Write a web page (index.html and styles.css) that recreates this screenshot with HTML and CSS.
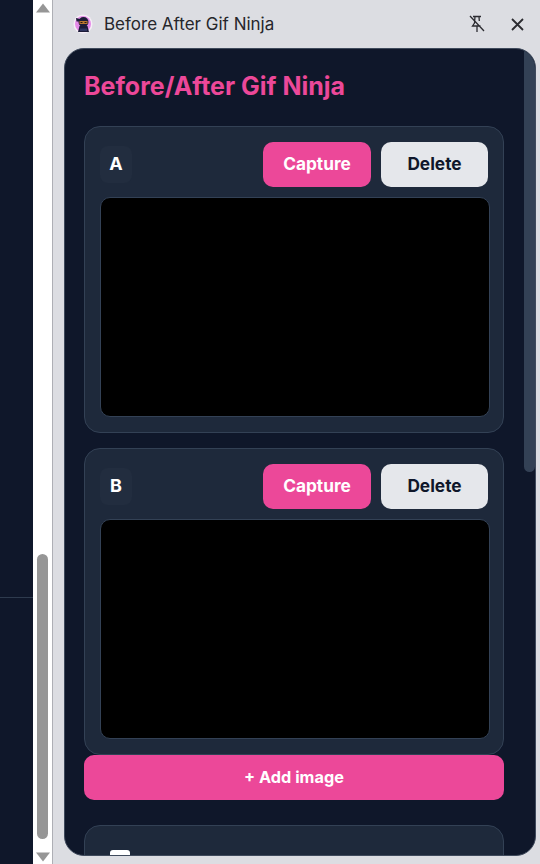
FILE: index.html
```html
<!DOCTYPE html>
<html lang="en">
<head>
<meta charset="utf-8">
<title>Before After Gif Ninja</title>
<link rel="stylesheet" href="styles.css">
</head>
<body>
<div class="page-behind"><div class="behind-line"></div></div>
<div class="page-scrollbar">
  <svg class="arrow" width="14" height="10" viewBox="0 0 14 10"><path d="M7 0.500 L14 9.500 H0 Z" fill="#969696"/></svg>
  <div class="page-thumb"></div>
  <svg class="arrow" width="14" height="10" viewBox="0 0 14 10"><path d="M0 0.500 H14 L7 9.500 Z" fill="#969696"/></svg>
</div>
<aside class="side-panel">
  <header class="panel-head">
    <svg class="logo" width="20" height="20" viewBox="0 0 20 20">
      <circle cx="10" cy="10" r="9.500" fill="#f6eef7"/>
      <circle cx="10" cy="10" r="8" fill="#e58be8"/>
      <path d="M3 4 L7 5 L7 7.500 L3.500 7.500 Z" fill="#1c1c38"/>
      <circle cx="10.500" cy="8" r="5" fill="#1c1c38"/>
      <path d="M6.500 12 H14.500 L16 18 H5 Z" fill="#1c1c38"/>
      <rect x="6.500" y="7" width="8" height="3" fill="#b9762f"/>
      <rect x="7.500" y="8" width="2" height="1" fill="#2a1a10"/>
      <rect x="11.500" y="8" width="2" height="1" fill="#2a1a10"/>
      <rect x="7" y="14.500" width="7" height="2.500" fill="#2e3560"/>
    </svg>
    <span class="panel-name">Before After Gif Ninja</span>
    <svg class="head-icon pin" width="16" height="18" viewBox="0 0 16 18" fill="none" stroke="#2b2b30" stroke-width="1.300">
      <path d="M4 1.500 H12 M6 1.500 L5.500 8 L3.500 11 H11.500 M10 1.500 L10.300 6 M8 11 V17 M1 1 L15 16"/>
    </svg>
    <svg class="head-icon close" width="13" height="13" viewBox="0 0 13 13" fill="none" stroke="#2b2b30" stroke-width="1.800">
      <path d="M1 1 L12 12 M12 1 L1 12"/>
    </svg>
  </header>
  <main class="app">
    <div class="app-scroll"></div>
    <h1 class="app-title">Before/After Gif Ninja</h1>
    <section class="card">
      <div class="card-row">
        <span class="tag">A</span>
        <button class="btn btn-pink">Capture</button>
        <button class="btn btn-light">Delete</button>
      </div>
      <div class="preview"></div>
    </section>
    <section class="card">
      <div class="card-row">
        <span class="tag">B</span>
        <button class="btn btn-pink">Capture</button>
        <button class="btn btn-light">Delete</button>
      </div>
      <div class="preview"></div>
    </section>
    <button class="add-btn">+ Add image</button>
    <section class="card options"><span class="check"></span></section>
  </main>
</aside>
</body>
</html>
```

FILE: styles.css
```css
* { box-sizing: border-box; }
html, body { margin: 0; height: 100%; overflow: hidden; }
body {
  display: flex;
  width: 540px;
  height: 864px;
  background: #0f172a;
  font-family: Inter, "Liberation Sans", sans-serif;
}
.page-behind {
  width: 33px;
  flex: none;
  background: #0f172a;
  padding-top: 597px;
}
.behind-line { height: 1px; background: #2e3b4e; }
.page-scrollbar {
  width: 19px;
  flex: none;
  background: #fff;
  display: flex;
  flex-direction: column;
  align-items: center;
  padding: 3px 0 2px;
}
.page-scrollbar .arrow { flex: none; }
.page-thumb {
  width: 11px;
  margin: 541px 0 13px;
  height: 285px;
  background: #969696;
  border-radius: 6px;
  flex: none;
}
.side-panel {
  flex: 1;
  min-width: 0;
  background: #dcdde2;
  border-left: 1px solid #aeafb5;
  padding: 0 4px 8px 11px;
  display: flex;
  flex-direction: column;
}
.panel-head {
  height: 48px;
  flex: none;
  display: flex;
  align-items: center;
  padding: 0 9px 0 9px;
}
.logo { flex: none; margin-right: 11px; }
.panel-name {
  font-family: Inter, "Liberation Sans", sans-serif;
  font-size: 17px;
  color: #26262b;
  flex: 1;
}
.head-icon { flex: none; }
.pin { margin-right: 26px; }
.close { margin-right: 3px; }
.app {
  flex: 1;
  min-height: 0;
  position: relative;
  overflow: hidden;
  background: #0f172a;
  border: 1px solid #3f4a5c;
  border-radius: 20px;
  padding: 0 31px 0 19px;
}
.app-scroll {
  position: absolute;
  top: 0;
  right: 0;
  width: 11px;
  height: 423px;
  background: #334155;
  border-radius: 0 0 6px 6px;
}
.app-title {
  margin: 0;
  height: 77px;
  padding-top: 21px;
  font-size: 25px;
  line-height: 32px;
  font-weight: 700;
  color: #ec4899;
}
.card {
  background: #1e293b;
  border: 1px solid #334155;
  border-radius: 16px;
  padding: 15px;
  height: 307px;
  margin-bottom: 15px;
}
.card + .add-btn { margin-top: -15px; }
.card-row {
  display: flex;
  align-items: center;
  height: 45px;
  gap: 10px;
  margin-bottom: 10px;
}
.tag {
  width: 32px;
  height: 37px;
  margin-right: auto;
  padding-bottom: 2px;
  background: #222d3f;
  border-radius: 8px;
  color: #fff;
  font-weight: 700;
  font-size: 18px;
  display: flex;
  align-items: center;
  justify-content: center;
}
.btn {
  height: 45px;
  border: 0;
  border-radius: 10px;
  font-family: Inter, "Liberation Sans", sans-serif;
  font-size: 17.300px;
  font-weight: 700;
  padding: 0 0 2px;
}
.btn-pink { width: 108px; background: #ec4899; color: #fff; }
.btn-light { width: 107px; background: #e5e7eb; color: #0f172a; }
.preview {
  height: 220px;
  margin-right: -2px;
  background: #000;
  border: 1px solid #334155;
  border-radius: 10px;
}
.add-btn {
  display: block;
  width: 100%;
  height: 45px;
  border: 0;
  border-radius: 10px;
  background: #ec4899;
  color: #fff;
  font-family: Inter, "Liberation Sans", sans-serif;
  font-size: 16.300px;
  font-weight: 700;
  padding: 0 0 2px;
}
.options { margin-top: 25px; padding-left: 25px; padding-top: 24px; }
.check {
  display: block;
  width: 20px;
  height: 20px;
  background: #fff;
  border-radius: 3px;
}
```
